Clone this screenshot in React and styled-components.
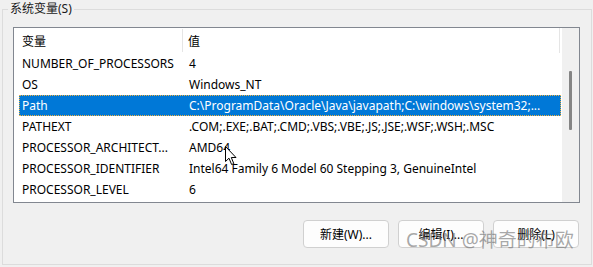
import React from "react";
import styled, { createGlobalStyle } from "styled-components";

const Global = createGlobalStyle`
  html, body { margin: 0; padding: 0; background: #f0f0f0; }
  body { font-family: "Segoe UI", "Noto Sans", "Noto Sans CJK SC", sans-serif; }
`;

const FONT = `"Segoe UI", "Noto Sans", "Noto Sans CJK SC", sans-serif`;

const Page = styled.div`
  position: relative;
  width: 593px;
  height: 267px;
  box-sizing: border-box;
  padding: 9px 1px 2px 2px;
  background: #f0f0f0;
  overflow: hidden;
`;

const Group = styled.div`
  position: relative;
  height: 100%;
  box-sizing: border-box;
  border: 1px solid #dcdcdc;
  display: flex;
  flex-direction: column;
  padding: 17px 11px 0 10px;
`;

const Legend = styled.span`
  position: absolute;
  top: -9px;
  left: 5px;
  padding: 0 2px;
  background: #f0f0f0;
  font-family: ${FONT};
  font-size: 12px;
  line-height: 16px;
  color: #1a1a1a;
`;

const ListBox = styled.div`
  height: 176px;
  box-sizing: border-box;
  border: 1px solid #828790;
  background: #fff;
  display: flex;
  font-family: ${FONT};
  font-size: 12px;
  color: #000;
`;

const ListArea = styled.div`
  flex: 1;
  min-width: 0;
  display: flex;
  flex-direction: column;
`;

const Header = styled.div`
  height: 25px;
  display: grid;
  grid-template-columns: 169px 1fr;
  border-right: 1px solid #e5e5e5;
  margin-right: 2px;
`;

const HeadCell = styled.div`
  display: flex;
  align-items: center;
  padding-left: ${(p) => p.$pad}px;
  border-right: ${(p) => (p.$divider ? "1px solid #e5e5e5" : "none")};
  margin: ${(p) => (p.$divider ? "1px 0 1px 0" : "0")};
  white-space: nowrap;
`;

const Row = styled.div`
  height: 21px;
  box-sizing: border-box;
  margin-left: 5px;
  margin-right: 1px;
  display: grid;
  grid-template-columns: 167px 1fr;
  align-items: center;
  background: ${(p) => (p.$selected ? "#0078d7" : "transparent")};
  color: ${(p) => (p.$selected ? "#fff" : "#000")};
  outline: ${(p) => (p.$selected ? "1px dotted #f0b040" : "none")};
  outline-offset: -1px;
`;

const Cell = styled.div`
  padding-left: 3px;
  white-space: nowrap;
  overflow: hidden;
`;

const ScrollBar = styled.div`
  width: 17px;
  flex: none;
  background: #f0f0f0;
  display: flex;
  justify-content: center;
  padding-top: 43px;
  box-sizing: border-box;
`;

const Thumb = styled.div`
  width: 3px;
  height: 59px;
  background: #858585;
  border-radius: 1px;
`;

const ButtonRow = styled.div`
  display: flex;
  justify-content: flex-end;
  gap: 9px;
  margin-top: 17px;
  padding-right: 1px;
`;

const Button = styled.button`
  width: 86px;
  height: 28px;
  box-sizing: border-box;
  border: 1px solid #d0d0d0;
  border-radius: 4px;
  background: #fdfdfd;
  font-family: ${FONT};
  font-size: 12px;
  color: #000;
  padding: 0;
`;

const Watermark = styled.div`
  position: absolute;
  left: 406px;
  top: 228px;
  font-family: "Noto Sans", "Noto Sans CJK SC", sans-serif;
  font-size: 19px;
  line-height: 25px;
  color: rgba(110, 110, 110, 0.6);
  white-space: nowrap;
  pointer-events: none;
`;

const Cursor = styled.svg`
  position: absolute;
  left: 225px;
  top: 146px;
`;

const rows = [
  ["NUMBER_OF_PROCESSORS", "4"],
  ["OS", "Windows_NT"],
  ["Path", "C:\\ProgramData\\Oracle\\Java\\javapath;C:\\windows\\system32;..."],
  ["PATHEXT", ".COM;.EXE;.BAT;.CMD;.VBS;.VBE;.JS;.JSE;.WSF;.WSH;.MSC"],
  ["PROCESSOR_ARCHITECT...", "AMD64"],
  ["PROCESSOR_IDENTIFIER", "Intel64 Family 6 Model 60 Stepping 3, GenuineIntel"],
  ["PROCESSOR_LEVEL", "6"],
];

export default function App() {
  return (
    <Page>
      <Global />
      <Group>
        <Legend>系统变量(S)</Legend>
        <ListBox>
          <ListArea>
            <Header>
              <HeadCell $pad={8} $divider>变量</HeadCell>
              <HeadCell $pad={5}>值</HeadCell>
            </Header>
            {rows.map(([k, v], i) => (
              <Row key={k} $selected={i === 2}>
                <Cell>{k}</Cell>
                <Cell>{v}</Cell>
              </Row>
            ))}
          </ListArea>
          <ScrollBar>
            <Thumb />
          </ScrollBar>
        </ListBox>
        <ButtonRow>
          <Button>新建(W)...</Button>
          <Button>编辑(I)...</Button>
          <Button>删除(L)</Button>
        </ButtonRow>
      </Group>
      <Watermark>CSDN @神奇的布欧</Watermark>
      <Cursor width="13" height="20" viewBox="0 0 13 20">
        <path d="M0.5 0.5 L0.5 15.5 L4 12.2 L6.6 18.5 L8.8 17.6 L6.3 11.5 L11 11.5 Z" fill="#fff" stroke="#000" strokeWidth="1" strokeLinejoin="miter" />
      </Cursor>
    </Page>
  );
}
